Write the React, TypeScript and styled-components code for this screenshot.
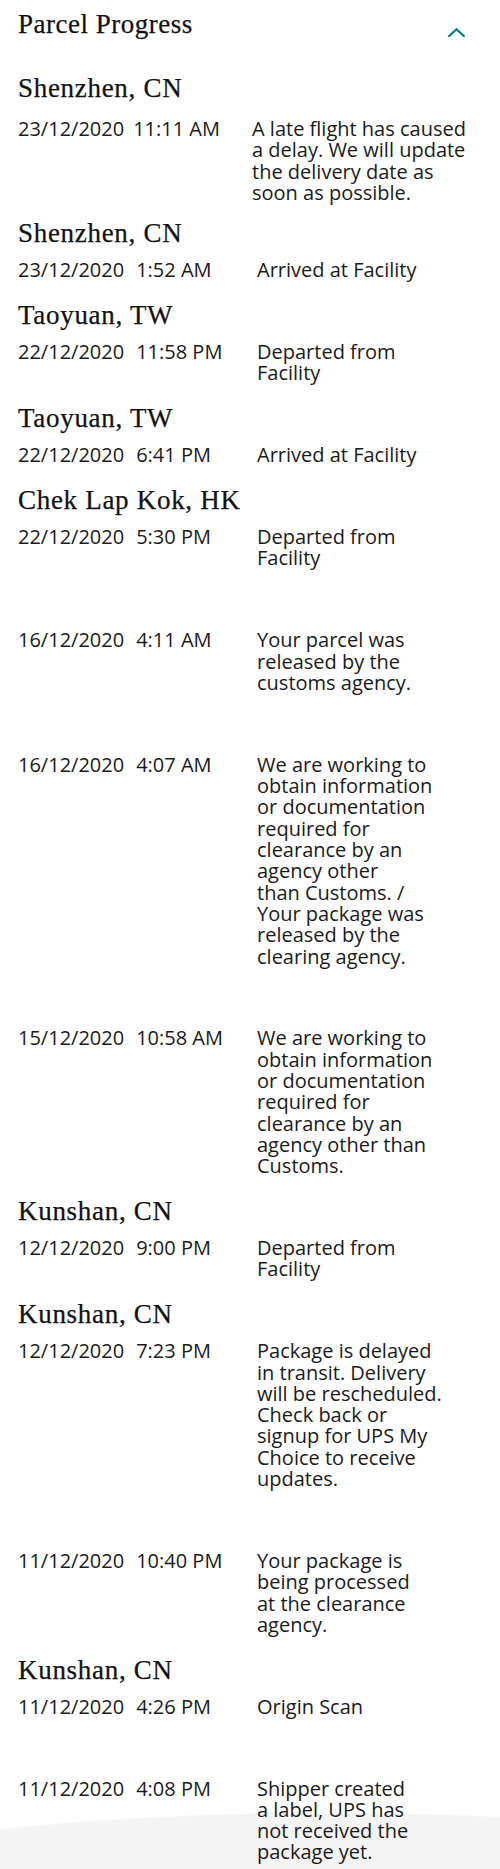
import React from "react";
import styled, { createGlobalStyle } from "styled-components";

const GlobalStyle = createGlobalStyle`
  html, body {
    margin: 0;
    padding: 0;
    background: #ffffff;
  }
  * { box-sizing: border-box; }
`;

const Page = styled.div`
  width: 500px;
  min-height: 1869px;
  padding: 8px 0 0 18px;
  color: #161616;
  background-color: #ffffff;
  background-image: radial-gradient(
    ellipse 520px 70px at 330px 1882px,
    #f4f4f4 0%,
    #f4f4f4 97%,
    rgba(255, 255, 255, 0) 100%
  );
  background-repeat: no-repeat;
`;

const Header = styled.div`
  display: flex;
  justify-content: space-between;
  align-items: flex-start;
  padding-right: 35px;
  margin-bottom: 32px;
`;

const Title = styled.h2`
  margin: 0;
  font-family: "Liberation Serif", "DejaVu Serif", serif;
  font-weight: 400;
  font-size: 27px;
  line-height: 32px;
  letter-spacing: 0.5px;
  color: #121212;
  -webkit-text-stroke: 0.25px #121212;
`;

const Toggle = styled.button`
  margin-top: 20px;
  padding: 0;
  border: 0;
  background: none;
  width: 17px;
  height: 9px;
  display: flex;
  cursor: pointer;
`;

const List = styled.div`
  display: flex;
  flex-direction: column;
`;

const Event = styled.section<{ $lead?: boolean }>`
  display: flex;
  flex-direction: column;
  padding-bottom: ${(p) => (p.$lead ? "14px" : "18.6px")};
`;

const Location = styled.h3<{ $lead?: boolean }>`
  margin: 0 0 ${(p) => (p.$lead ? "14px" : "10px")};
  height: 32px;
  font-family: "Liberation Serif", "DejaVu Serif", serif;
  font-weight: 400;
  font-size: 27px;
  line-height: 32px;
  letter-spacing: 0.7px;
  color: #121212;
  -webkit-text-stroke: 0.25px #121212;
`;

const Row = styled.div<{ $dateCol: number }>`
  display: grid;
  grid-template-columns: ${(p) => p.$dateCol}px 1fr;
  font-family: "Open Sans", "Noto Sans", sans-serif;
  font-size: 20px;
  line-height: 21.3px;
  color: #1a1a1a;
`;

const When = styled.div`
  white-space: nowrap;
  display: flex;
`;

const Time = styled.span<{ $gap: number }>`
  margin-left: ${(p) => p.$gap}px;
`;

const Desc = styled.div`
  white-space: nowrap;
`;

type Item = {
  loc: string;
  date: string;
  time: string;
  lines: string[];
  lead?: boolean;
};

const items: Item[] = [
  {
    loc: "Shenzhen, CN",
    date: "23/12/2020",
    time: "11:11 AM",
    lines: [
      "A late flight has caused",
      "a delay. We will update",
      "the delivery date as",
      "soon as possible.",
    ],
    lead: true,
  },
  { loc: "Shenzhen, CN", date: "23/12/2020", time: "1:52 AM", lines: ["Arrived at Facility"] },
  { loc: "Taoyuan, TW", date: "22/12/2020", time: "11:58 PM", lines: ["Departed from", "Facility"] },
  { loc: "Taoyuan, TW", date: "22/12/2020", time: "6:41 PM", lines: ["Arrived at Facility"] },
  { loc: "Chek Lap Kok, HK", date: "22/12/2020", time: "5:30 PM", lines: ["Departed from", "Facility"] },
  {
    loc: "",
    date: "16/12/2020",
    time: "4:11 AM",
    lines: ["Your parcel was", "released by the", "customs agency."],
  },
  {
    loc: "",
    date: "16/12/2020",
    time: "4:07 AM",
    lines: [
      "We are working to",
      "obtain information",
      "or documentation",
      "required for",
      "clearance by an",
      "agency other",
      "than Customs. /",
      "Your package was",
      "released by the",
      "clearing agency.",
    ],
  },
  {
    loc: "",
    date: "15/12/2020",
    time: "10:58 AM",
    lines: [
      "We are working to",
      "obtain information",
      "or documentation",
      "required for",
      "clearance by an",
      "agency other than",
      "Customs.",
    ],
  },
  { loc: "Kunshan, CN", date: "12/12/2020", time: "9:00 PM", lines: ["Departed from", "Facility"] },
  {
    loc: "Kunshan, CN",
    date: "12/12/2020",
    time: "7:23 PM",
    lines: [
      "Package is delayed",
      "in transit. Delivery",
      "will be rescheduled.",
      "Check back or",
      "signup for UPS My",
      "Choice to receive",
      "updates.",
    ],
  },
  {
    loc: "",
    date: "11/12/2020",
    time: "10:40 PM",
    lines: ["Your package is", "being processed", "at the clearance", "agency."],
  },
  { loc: "Kunshan, CN", date: "11/12/2020", time: "4:26 PM", lines: ["Origin Scan"] },
  {
    loc: "",
    date: "11/12/2020",
    time: "4:08 PM",
    lines: ["Shipper created", "a label, UPS has", "not received the", "package yet."],
  },
];

const Chevron = () => (
  <svg width="17" height="9" viewBox="0 0 17 9" fill="none">
    <polyline
      points="1.2,8 8.5,1.3 15.8,8"
      stroke="#0a8080"
      strokeWidth="2.2"
      strokeLinecap="square"
      strokeLinejoin="miter"
    />
  </svg>
);

export default function App() {
  return (
    <>
      <GlobalStyle />
      <Page>
        <Header>
          <Title>Parcel Progress</Title>
          <Toggle aria-label="Collapse">
            <Chevron />
          </Toggle>
        </Header>
        <List>
          {items.map((it, i) => (
            <Event key={i} $lead={it.lead}>
              <Location $lead={it.lead}>{it.loc}</Location>
              <Row $dateCol={it.lead ? 234 : 239}>
                <When>
                  <span>{it.date}</span>
                  <Time $gap={it.lead ? 9 : 12}>{it.time}</Time>
                </When>
                <Desc>
                  {it.lines.map((l, j) => (
                    <React.Fragment key={j}>
                      {j > 0 && <br />}
                      {l}
                    </React.Fragment>
                  ))}
                </Desc>
              </Row>
            </Event>
          ))}
        </List>
      </Page>
    </>
  );
}
